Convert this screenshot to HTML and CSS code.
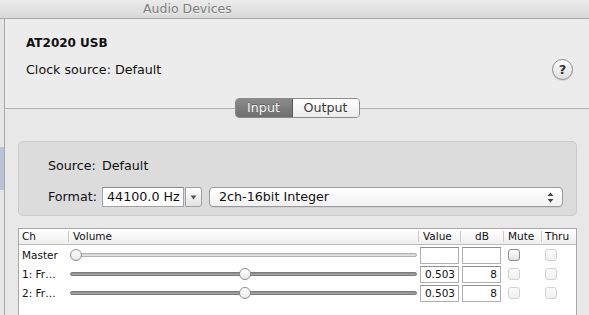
FILE: index.html
```html
<!DOCTYPE html>
<html>
<head>
<meta charset="utf-8">
<link rel="stylesheet" href="styles.css">
</head>
<body>
<div class="window">
  <div class="titlebar">Audio Devices</div>
  <div class="body">
    <div class="sidebar"><div class="sel"></div></div>
    <div class="main">
      <div class="device">
        <div class="dev-name">AT2020 USB</div>
        <div class="clock-row">
          <span>Clock source:&nbsp;Default</span>
          <span class="help">?</span>
        </div>
      </div>
      <div class="tabbar">
        <div class="seg">
          <span class="seg-item active">Input</span>
          <span class="seg-item">Output</span>
        </div>
      </div>
      <div class="pane">
        <div class="group">
          <span class="lbl">Source:</span>
          <span class="val">Default</span>
          <span class="lbl">Format:</span>
          <div class="fmt-row">
            <span class="combo">44100.0 Hz</span>
            <span class="combo-btn"><svg width="7" height="5" viewBox="0 0 7 5"><path d="M0.5 0.5 L6.5 0.5 L3.5 4.5 Z" fill="#555"/></svg></span>
            <span class="popup">2ch-16bit Integer
              <svg class="updown" width="7" height="11" viewBox="0 0 7 11"><path d="M3.5 0.5 L6.5 4 L0.5 4 Z" fill="#444"/><path d="M0.5 7 L6.5 7 L3.5 10.5 Z" fill="#444"/></svg>
            </span>
          </div>
        </div>
        <div class="table">
          <div class="thead">
            <span class="th first">Ch</span>
            <span class="th">Volume</span>
            <span class="th">Value</span>
            <span class="th center">dB</span>
            <span class="th">Mute</span>
            <span class="th thru">Thru</span>
          </div>
          <div class="tr">
            <span class="td name">Master</span>
            <span class="td vol"><span class="slider light"><span class="knob" style="--v:0"></span></span></span>
            <span class="td"><span class="field"></span></span>
            <span class="td"><span class="field"></span></span>
            <span class="td"><span class="check on"></span></span>
            <span class="td thru"><span class="check"></span></span>
          </div>
          <div class="tr">
            <span class="td name">1: Fr…</span>
            <span class="td vol"><span class="slider"><span class="knob" style="--v:0.503"></span></span></span>
            <span class="td"><span class="field">0.503</span></span>
            <span class="td"><span class="field">8</span></span>
            <span class="td"><span class="check"></span></span>
            <span class="td thru"><span class="check"></span></span>
          </div>
          <div class="tr">
            <span class="td name">2: Fr…</span>
            <span class="td vol"><span class="slider"><span class="knob" style="--v:0.503"></span></span></span>
            <span class="td"><span class="field">0.503</span></span>
            <span class="td"><span class="field">8</span></span>
            <span class="td"><span class="check"></span></span>
            <span class="td thru"><span class="check"></span></span>
          </div>
        </div>
      </div>
    </div>
  </div>
</div>
</body>
</html>
```
FILE: styles.css
```css
html, body {
  margin: 0;
  padding: 0;
}
body {
  width: 589px;
  height: 315px;
  overflow: hidden;
  font-family: "DejaVu Sans", "Liberation Sans", sans-serif;
  font-size: 12.7px;
  color: #111;
  background: #ececec;
}
.window {
  display: flex;
  flex-direction: column;
  height: 315px;
}
.titlebar {
  flex-shrink: 0;
  height: 18px;
  line-height: 17px;
  border-bottom: 1px solid #a9a9a9;
  background: linear-gradient(#ebebeb, #d9d9d9);
  color: #7d7d7d;
  text-shadow: 0 1px 0 rgba(255,255,255,0.6);
  font-size: 12.5px;
  padding-left: 143px;
}
.body {
  display: flex;
  flex: 1;
  min-height: 0;
  overflow: hidden;
}
.sidebar {
  flex-shrink: 0;
  width: 4px;
  border-right: 1px solid #a9a9a9;
  background: #e6e6e6;
}
.sel {
  margin-top: 128px;
  height: 43px;
  background: #b9c3d7;
}
.main {
  flex: 1;
  display: flex;
  flex-direction: column;
  min-width: 0;
  min-height: 0;
}
.device {
  flex-shrink: 0;
  height: 79px;
  box-sizing: border-box;
  padding: 16px 16px 0 21px;
  background: #ececec;
}
.dev-name {
  font-weight: bold;
  font-size: 12px;
  line-height: 16px;
}
.clock-row {
  margin-top: 8px;
  display: flex;
  justify-content: space-between;
  align-items: center;
  height: 21px;
}
.help {
  width: 19px;
  height: 19px;
  border: 1px solid #8d8d8d;
  border-radius: 50%;
  background: linear-gradient(#fdfdfd, #dedede);
  display: flex;
  align-items: center;
  justify-content: center;
  font-weight: bold;
  font-size: 13px;
  color: #333;
  box-shadow: 0 1px 1px rgba(0,0,0,0.1);
}
.tabbar {
  flex-shrink: 0;
  height: 20px;
  display: flex;
  justify-content: center;
  background: linear-gradient(#ececec 0, #ececec 10px, #b4b4b4 10px, #b4b4b4 11px, #e8e8e8 11px);
}
.seg {
  display: flex;
  height: 20px;
  width: 125px;
  box-sizing: border-box;
  border-radius: 4px;
  overflow: hidden;
  border: 1px solid #8c8c8c;
  box-shadow: 0 1px 0 rgba(255,255,255,0.6);
}
.seg-item {
  display: flex;
  align-items: center;
  justify-content: center;
  line-height: 18px;
  color: #3b3b3b;
  background: linear-gradient(#ffffff, #ebebeb);
}
.seg-item.active {
  width: 56px;
  color: #f4f4f4;
  background: linear-gradient(#8b8b8b, #6e6e6e);
  border-right: 1px solid #5c5c5c;
  text-shadow: 0 -1px 0 rgba(0,0,0,0.3);
}
.seg-item + .seg-item {
  flex: 1;
}
.pane {
  flex: 1;
  min-height: 0;
  overflow: hidden;
  background: #e8e8e8;
  padding: 23px 12px 0 13px;
}
.group {
  height: 75px;
  box-sizing: border-box;
  border: 1px solid #cbcbcb;
  border-radius: 5px;
  background: #dcdcdc;
  padding: 16px 13px 0 29px;
  display: grid;
  grid-template-columns: 54px 1fr;
  grid-template-rows: 16px 20px;
  row-gap: 13px;
  align-items: center;
}
.lbl, .val {
  line-height: 16px;
}
.fmt-row {
  display: flex;
  height: 20px;
}
.combo {
  width: 82px;
  box-sizing: border-box;
  height: 20px;
  background: #fff;
  border: 1px solid #a3a3a3;
  border-top-color: #8a8a8a;
  padding-left: 4px;
  line-height: 18px;
}
.combo-btn {
  width: 17px;
  height: 20px;
  box-sizing: border-box;
  margin-left: 1px;
  border: 1px solid #9f9f9f;
  border-radius: 0 3px 3px 0;
  background: linear-gradient(#ffffff, #e2e2e2);
  display: flex;
  align-items: center;
  justify-content: center;
}
.popup {
  flex: 1;
  margin-left: 7px;
  height: 20px;
  box-sizing: border-box;
  border: 1px solid #9a9a9a;
  border-radius: 4px;
  background: linear-gradient(#ffffff, #f1f1f1);
  padding: 0 8px 0 9px;
  line-height: 18px;
  display: flex;
  justify-content: space-between;
  align-items: center;
  box-shadow: 0 1px 0 rgba(0,0,0,0.05);
}
.table {
  margin-top: 12px;
  height: 100px;
  border: 1px solid #a8a8a8;
  background: #fff;
  font-size: 10.5px;
}
.thead, .tr {
  display: grid;
  grid-template-columns: 49px 350px 42px 43px 38px 1fr;
  align-items: center;
}
.thead {
  height: 15px;
  border-bottom: 1px solid #b9b9b9;
  background: linear-gradient(#ffffff, #efefef);
}
.th {
  height: 11px;
  line-height: 11px;
  border-left: 1px solid #c9c9c9;
  padding-left: 4px;
  color: #111;
}
.th.first {
  border-left: none;
  padding-left: 3px;
}
.th.center {
  text-align: center;
  padding-left: 0;
}
.th.thru {
  padding-left: 3px;
}
.tr {
  height: 19px;
}
.td {
  display: flex;
  align-items: center;
  height: 19px;
}
.td.name {
  padding-left: 3px;
}
.td.vol {
  padding-left: 2px;
}
.slider {
  position: relative;
  width: 347px;
  height: 4px;
  box-sizing: border-box;
  border-radius: 2px;
  border: 1px solid #7b7b7b;
  background: linear-gradient(#8c8c8c, #a9a9a9);
}
.slider.light {
  border-color: #b2b2b2;
  background: linear-gradient(#d2d2d2, #e6e6e6);
}
.knob {
  position: absolute;
  top: -5px;
  left: calc(var(--v) * 335px - 1px);
  width: 12px;
  height: 12px;
  box-sizing: border-box;
  border-radius: 50%;
  border: 1px solid #8f8f8f;
  background: linear-gradient(#ffffff, #e9e9e9);
}
.field {
  margin-left: 2px;
  width: 39px;
  height: 17px;
  box-sizing: border-box;
  border: 1px solid #b0b0b0;
  border-top-color: #8f8f8f;
  background: #fff;
  text-align: right;
  padding-right: 3px;
  line-height: 15px;
  margin-top: 1px;
}
.check {
  margin-left: 5px;
  width: 12px;
  height: 12px;
  box-sizing: border-box;
  border-radius: 3px;
  border: 1px solid #d2d2d2;
  background: linear-gradient(#fafafa, #f0f0f0);
}
.check.on {
  border-color: #8e8e8e;
  background: linear-gradient(#ffffff, #e2e2e2);
}
.td.thru .check {
  margin-left: 4px;
}
```
